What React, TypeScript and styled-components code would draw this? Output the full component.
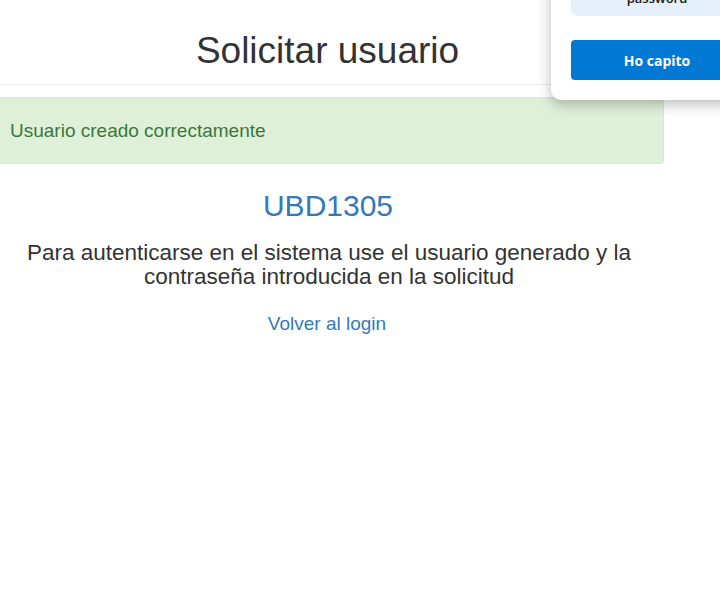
import React from "react";
import styled, { createGlobalStyle } from "styled-components";

const GlobalStyle = createGlobalStyle`
  html, body {
    margin: 0;
    padding: 0;
    background: #ffffff;
    overflow: hidden;
  }
  body {
    font-family: "Liberation Sans", Arial, sans-serif;
    color: #333333;
    width: 720px;
    height: 594px;
    position: relative;
  }
`;

const Page = styled.div`
  width: 670px;
  margin-left: -6px;
  display: flex;
  flex-direction: column;
  align-items: center;
`;

const Header = styled.div`
  align-self: stretch;
  display: flex;
  justify-content: center;
  border-bottom: 1px solid #eeeeee;
  padding: 29px 163px 12px 0;
  margin: 0 -200px 0 -40px;
`;

const Title = styled.h1`
  margin: 0;
  font-size: 37px;
  font-weight: 400;
  line-height: 43px;
  color: #333333;
`;

const Alert = styled.div`
  align-self: stretch;
  box-sizing: border-box;
  margin-top: 12px;
  height: 67px;
  padding: 22px 15px 0;
  background: #dff0d8;
  border: 1px solid #d6e9c6;
  border-radius: 4px;
  color: #3c763d;
  font-size: 19px;
  line-height: 22px;
`;

const UserCode = styled.h3`
  margin: 25px 0 0;
  font-size: 30px;
  font-weight: 400;
  line-height: 34px;
  color: #337ab7;
  transform: translateX(-1px);
`;

const Notice = styled.p`
  margin: 18px 0 0;
  font-size: 22.5px;
  line-height: 24px;
  text-align: center;
  color: #333333;
`;

const BackLink = styled.a`
  margin-top: 24px;
  font-size: 19px;
  line-height: 22px;
  color: #337ab7;
  text-decoration: none;
  cursor: pointer;
  transform: translateX(-2px);
`;

const Popup = styled.div`
  position: absolute;
  top: -30px;
  left: 551px;
  width: 212px;
  height: 130px;
  box-sizing: border-box;
  padding: 0 20px;
  background: #ffffff;
  border-radius: 10px;
  box-shadow: 0 4px 14px rgba(0, 0, 0, 0.28);
  display: flex;
  flex-direction: column;
  font-family: "Open Sans", "Noto Sans", sans-serif;
`;

const Hint = styled.div`
  height: 46px;
  background: #e5f0fa;
  border-radius: 0 0 6px 6px;
  display: flex;
  align-items: flex-end;
  justify-content: center;
  padding-bottom: 11px;
  box-sizing: border-box;
  font-size: 13px;
  font-weight: 600;
  line-height: 14px;
  color: #1b1b1b;
`;

const OkButton = styled.button`
  margin-top: 24px;
  height: 40px;
  border: none;
  border-radius: 4px;
  background: #0078d4;
  color: #ffffff;
  font-family: inherit;
  font-size: 14px;
  font-weight: 700;
  cursor: pointer;
`;

const App = () => {
  return (
    <>
      <GlobalStyle />
      <Page>
        <Header>
          <Title>Solicitar usuario</Title>
        </Header>
        <Alert>Usuario creado correctamente</Alert>
        <UserCode>UBD1305</UserCode>
        <Notice>
          Para autenticarse en el sistema use el usuario generado y la
          <br />
          contraseña introducida en la solicitud
        </Notice>
        <BackLink>Volver al login</BackLink>
      </Page>
      <Popup>
        <Hint>password</Hint>
        <OkButton>Ho capito</OkButton>
      </Popup>
    </>
  );
};

export default App;
